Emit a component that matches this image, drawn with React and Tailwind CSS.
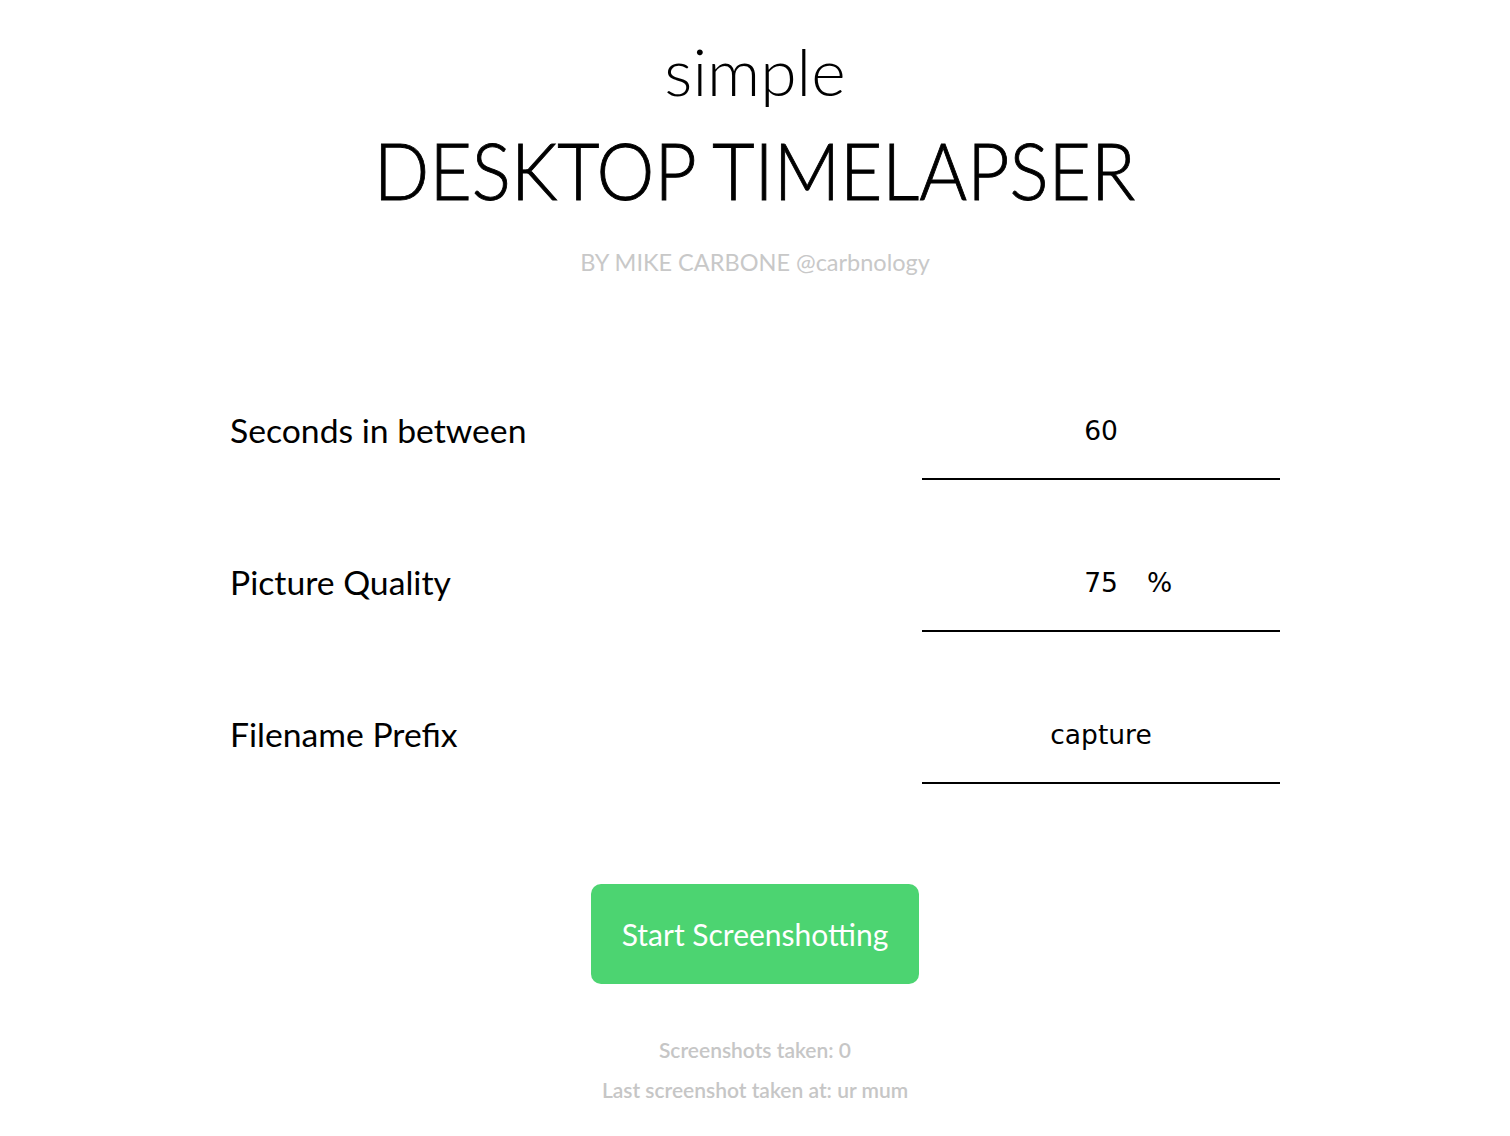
export default function App() {
  const rows = [
    { label: "Seconds in between", value: "60" },
    { label: "Picture Quality", value: "75", suffix: "%" },
    { label: "Filename Prefix", value: "capture" },
  ];
  return (
    <div className="min-h-[1136px] w-full bg-white font-['Lato',sans-serif] text-black">
      <div className="mx-auto flex w-[1050px] flex-col items-center">
        <div className="mt-[34px] text-[66px] leading-[74px] font-light">simple</div>
        <div className="mt-[14px] text-[79px] leading-[95px] font-light whitespace-nowrap scale-x-[0.925] [-webkit-text-stroke:0.9px_black]">DESKTOP TIMELAPSER</div>
        <div className="mt-[31px] text-[23.5px] leading-[29px] font-normal text-[#c8c8c8]">BY MIKE CARBONE @carbnology</div>

        <div className="mt-[133px] flex w-full flex-col gap-[82px]">
          {rows.map((r) => (
            <div key={r.label} className="flex w-full items-end justify-between">
              <div className="mb-[30px] text-[33.7px] leading-[40px]">{r.label}</div>
              <div className="relative flex w-[358px] justify-center border-b-2 border-black pb-[31px] font-['DejaVu_Sans',sans-serif] text-[26.5px] leading-[32px]">
                <span>{r.value}</span>
                {r.suffix && <span className="absolute left-[225px] top-0">{r.suffix}</span>}
              </div>
            </div>
          ))}
        </div>

        <button className="mt-[100px] h-[100px] w-[328px] rounded-[10px] bg-[#4cd471] text-[30px] text-white">
          Start Screenshotting
        </button>

        <div className="mt-[46px] flex flex-col items-center text-[21px] leading-[40px] font-semibold text-[#c6c6c6]">
          <div>Screenshots taken: 0</div>
          <div>Last screenshot taken at: ur mum</div>
        </div>
      </div>
    </div>
  );
}
